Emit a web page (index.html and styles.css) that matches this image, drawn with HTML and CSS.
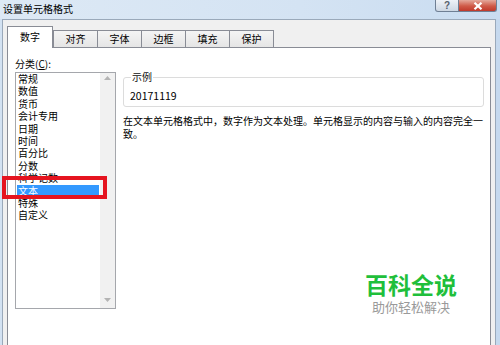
FILE: index.html
```html
<!DOCTYPE html>
<html lang="zh-CN">
<head>
  <meta charset="UTF-8">
  <title>设置单元格格式</title>
  <link rel="stylesheet" href="styles.css">
</head>
<body>

  <div class="window">
    <div class="titlebar">
      <span class="title">设置单元格格式</span>
      <div class="caption-btns">
        <span class="btn-help">?</span>
        <span class="btn-close">
          <svg width="10" height="8" viewBox="0 0 10 8"><path d="M1.5 0.8 L8.5 7.2 M8.5 0.8 L1.5 7.2" stroke="#fff" stroke-width="2.2"/></svg>
        </span>
      </div>
    </div>

    <div class="client">
      <div class="tabs">
        <div class="tab active">数字</div>
        <div class="tab">对齐</div>
        <div class="tab">字体</div>
        <div class="tab">边框</div>
        <div class="tab">填充</div>
        <div class="tab">保护</div>
      </div>

      <div class="tab-body">
        <div class="category">
          <div class="label">分类(<u>C</u>):</div>
          <div class="listbox">
            <ul class="items">
              <li>常规</li>
              <li>数值</li>
              <li>货币</li>
              <li>会计专用</li>
              <li>日期</li>
              <li>时间</li>
              <li>百分比</li>
              <li>分数</li>
              <li>科学记数</li>
              <li class="selected">文本</li>
              <li>特殊</li>
              <li>自定义</li>
            </ul>
            <div class="scrollbar">
              <svg width="7" height="4" viewBox="0 0 7 4"><path d="M0 4 L3.5 0 L7 4 Z" fill="#b4b4b4"/></svg>
              <svg width="7" height="4" viewBox="0 0 7 4"><path d="M0 0 L3.5 4 L7 0 Z" fill="#b4b4b4"/></svg>
            </div>
          </div>
        </div>

        <div class="detail">
          <fieldset class="sample">
            <legend>示例</legend>
            <div class="sample-value">20171119</div>
          </fieldset>
          <p class="desc">在文本单元格格式中，数字作为文本处理。单元格显示的内容与输入的内容完全一致。</p>
        </div>
      </div>
    </div>
  </div>

  <div class="mark-box"></div>

  <div class="watermark">
    <div class="wm-main">百科全说</div>
    <div class="wm-sub">助你轻松解决</div>
  </div>

</body>
</html>
```

FILE: styles.css
```css
html, body {
  margin: 0;
  padding: 0;
}

body {
  width: 500px;
  height: 345px;
  overflow: hidden;
  position: relative;
  font-family: "Noto Sans CJK SC", "Liberation Sans", sans-serif;
  font-size: 10px;
  color: #000;
  background: linear-gradient(to right, #d3e2f2, #c6d9ee);
}

.titlebar {
  display: flex;
  height: 19px;
  padding: 0 3px 0 3px;
  background: linear-gradient(to right, #dde9f5, #d4e3f3 60%, #c9dcf0);
}

.title {
  line-height: 18px;
}

.caption-btns {
  display: flex;
  margin-left: auto;
  height: 12px;
}

.btn-help, .btn-close {
  display: flex;
  align-items: center;
  justify-content: center;
  box-sizing: border-box;
  height: 12px;
  border: 1px solid #6f7f94;
  border-top: none;
}

.btn-help {
  width: 24px;
  border-radius: 0 0 0 3px;
  background: linear-gradient(to bottom, #eef2f7, #cdd7e3);
  color: #56606c;
  font-family: "Liberation Sans", sans-serif;
  font-size: 10px;
  font-weight: bold;
  line-height: 10px;
}

.btn-close {
  width: 38px;
  border-left: none;
  border-radius: 0 0 3px 0;
  background: linear-gradient(to bottom, #e4a99c, #cf5a48 55%, #c0392b);
}

.client {
  margin: 0 4px 0 2px;
  height: 319px;
  border: 1px solid #9aa9ba;
  border-bottom: none;
  background: #f0f0f0;
  padding: 6px 4px 0 4px;
}

.tabs {
  display: flex;
  align-items: flex-end;
  height: 21px;
  position: relative;
  z-index: 1;
}

.tab {
  box-sizing: border-box;
  width: 45px;
  height: 17px;
  border: 1px solid #898c95;
  border-bottom: none;
  background: linear-gradient(to bottom, #f4f4f4, #e5e5e5);
  text-align: center;
  line-height: 16px;
}

.tab + .tab + .tab {
  margin-left: -1px;
}

.tab.active {
  width: 46px;
  height: 22px;
  margin-bottom: -1px;
  background: #fff;
  line-height: 20px;
}

.tab-body {
  display: grid;
  grid-template-columns: 101px 361px;
  column-gap: 7px;
  align-items: start;
  height: 289px;
  border: 1px solid #898c95;
  border-bottom: none;
  background: #fff;
  padding: 8px 6px 0 7px;
}

.label {
  line-height: 16px;
}

.listbox {
  display: flex;
  box-sizing: border-box;
  height: 237px;
  border: 1px solid #a5a7ac;
}

.items {
  flex: 1;
  list-style: none;
  margin: 0;
  padding: 0 1px;
}

.items li {
  line-height: 12.4px;
  height: 12.4px;
  padding-left: 1px;
  white-space: nowrap;
}

.items li.selected {
  background: #3399ff;
  color: #fff;
}

.scrollbar {
  width: 15px;
  display: flex;
  flex-direction: column;
  align-items: center;
  justify-content: space-between;
  padding: 3px 0 6px;
  background: #f1f1f1;
}

.detail {
  margin-top: 15px;
}

.sample {
  margin: 0;
  padding: 6px 5px 3px 6px;
  border: 1px solid #dcdcdc;
  border-radius: 3px;
}

.sample legend {
  padding: 0 1px;
  margin-left: 1px;
  line-height: 12px;
  color: #111;
}

.sample-value {
  line-height: 14px;
  font-size: 10.5px;
}

.desc {
  margin: 7px 0 0 0;
  width: 361px;
  line-height: 13px;
}

.mark-box {
  position: absolute;
  left: 2px;
  top: 176px;
  width: 105px;
  height: 23px;
  box-sizing: border-box;
  border: 4px solid #e5141f;
}

.watermark {
  position: absolute;
  left: 363px;
  top: 272px;
  width: 96px;
  text-align: center;
}

.wm-main {
  font-size: 23px;
  line-height: 24px;
  font-weight: 700;
  color: #1fbf3b;
}

.wm-sub {
  margin-top: 3px;
  font-size: 13px;
  line-height: 15px;
  color: #9a9a9a;
}
```
